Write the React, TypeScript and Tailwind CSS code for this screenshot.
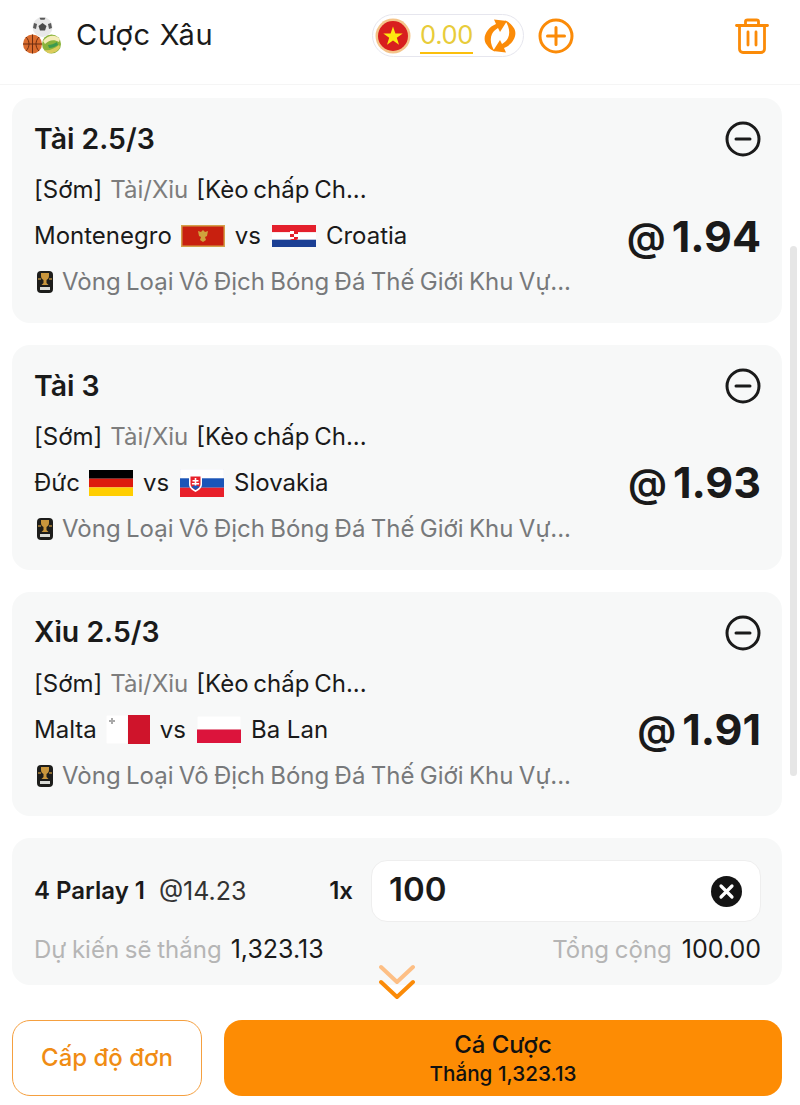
import { ReactNode } from "react";

function SportsIcon() {
  return (
    <svg width="38" height="37" viewBox="0 0 38 37" className="shrink-0">
      <circle cx="19.500" cy="10" r="10" fill="#e8e8e8" />
      <path d="M19.500 6l4 3-1.500 4.500h-5L15.500 9z" fill="#4a4a4a" />
      <path d="M11 6l3 1-1 5-3-1zM28 6l-3 1 1 5 3-1zM16.500 .800h6l-1 2h-4z" fill="#5a5a5a" />
      <circle cx="28.500" cy="27" r="9.500" fill="#8ab33a" />
      <path d="M20 24c5-6 12-7 17-2l-1 3c-5-3-10-2-14 2z" fill="#f4ecb8" />
      <path d="M21 33c5 1 10-1 15-5l1 2c-2 5-8 7-12 6z" fill="#dccb5c" />
      <path d="M25 28c3 0 6-1 9-3l1 3c-3 2-6 3-9 3z" fill="#3c9a50" />
      <circle cx="9.500" cy="27" r="9.500" fill="#da6c2e" />
      <path d="M0 27h19M9.500 17.500v19M3 20c4 4 4 10 0 14M16 20c-4 4-4 10 0 14" stroke="#6d2d10" strokeWidth="1" fill="none" />
    </svg>
  );
}

function CoinFlag() {
  return (
    <svg width="36" height="36" viewBox="0 0 36 36" className="shrink-0">
      <circle cx="18" cy="18" r="17.500" fill="#f4c48a" />
      <circle cx="18" cy="18" r="15" fill="#d81e1e" />
      <path d="M18 8.500l2.400 6.900h7.300l-5.900 4.300 2.200 7-6-4.300-6 4.300 2.200-7-5.900-4.300h7.300z" fill="#fde910" />
    </svg>
  );
}

function RefreshIcon() {
  const half = "M13 6L11 1.500 24 3l-7 11-2-4c-2.500 1.500-4.500 3-6 6-2.500 5.500-1 12 3 17.500-3-1-6-3-8.500-7C-1.500 20 4 9.500 13 6z";
  return (
    <svg width="34" height="36" viewBox="0 0 34 36" fill="#fb8b08" className="shrink-0">
      <path d={half} />
      <path d={half} transform="rotate(180 17 18)" />
    </svg>
  );
}

function PlusCircle() {
  return (
    <svg width="36" height="36" viewBox="0 0 36 36" fill="none" stroke="#fb8b08" strokeWidth="3" strokeLinecap="round" className="shrink-0">
      <circle cx="18" cy="18" r="16" />
      <path d="M18 9.500v17M9.500 18h17" />
    </svg>
  );
}

function TrashIcon() {
  return (
    <svg width="34" height="36" viewBox="0 0 34 36" fill="none" stroke="#fb8b08" strokeWidth="2.800" strokeLinecap="round" strokeLinejoin="round" className="shrink-0">
      <path d="M1.500 7.500h31" />
      <path d="M10.500 7V3.500c0-1 1-1.500 2-1.500h9c1 0 2 .5 2 1.500V7" />
      <path d="M4.500 8v23c0 2 1.500 3.500 3.500 3.500h18c2 0 3.500-1.500 3.500-3.500V8" />
      <path d="M13 14v13M21 14v13" />
    </svg>
  );
}

function MinusCircle() {
  return (
    <svg width="36" height="36" viewBox="0 0 36 36" fill="none" stroke="#1a1a1a" strokeWidth="3" strokeLinecap="round" className="shrink-0">
      <circle cx="18" cy="18" r="16" />
      <path d="M11 18h14" />
    </svg>
  );
}

function TrophyIcon() {
  return (
    <svg width="16" height="22" viewBox="0 0 16 22" className="shrink-0">
      <rect x="0" y="0" width="16" height="22" rx="4" fill="#1d1d1b" />
      <path d="M4 2h8v3c0 2-1 3-2.500 4v3l2 2h-7l2-2V9C5 8 4 7 4 5z" fill="#c9963c" />
      <path d="M1 7h3v2H1zM12 7h3v2h-3z" fill="#8a6a30" />
      <rect x="3" y="16" width="10" height="3" fill="#d9dad5" />
    </svg>
  );
}

function Flag({ children, h = 22 }: { children: ReactNode; h?: number }) {
  return (
    <svg width="44" height={h} viewBox={`0 0 44 ${h}`} className="shrink-0">
      {children}
    </svg>
  );
}

const montenegro = (
  <Flag>
    <rect width="44" height="22" fill="#d4a04a" />
    <rect x="1.500" y="1.500" width="41" height="19" fill="#c8200f" />
    <path d="M22 5l2 2 3-1-1 5-2 1 1 3-3 2-3-2 1-3-2-1-1-5 3 1z" fill="#cfa23c" />
  </Flag>
);
const croatia = (
  <Flag>
    <rect width="44" height="7.300" fill="#e4202c" />
    <rect y="7.300" width="44" height="7.400" fill="#ffffff" />
    <rect y="14.700" width="44" height="7.300" fill="#1b3f94" />
    <rect x="18" y="3" width="8" height="12" rx="2" fill="#e4202c" />
    <path d="M18 6h4v3h-4zM22 9h4v3h-4zM18 12h4v2h-4z" fill="#ffffff" />
  </Flag>
);
const germany = (
  <Flag h={26}>
    <rect width="44" height="8.700" fill="#000000" />
    <rect y="8.700" width="44" height="8.700" fill="#dd1a0e" />
    <rect y="17.400" width="44" height="8.600" fill="#ffce00" />
  </Flag>
);
const slovakia = (
  <Flag h={28}>
    <rect width="44" height="9.300" fill="#ffffff" stroke="#e6e6f2" strokeWidth="0.500" />
    <rect y="9.300" width="44" height="9.400" fill="#1b55b8" />
    <rect y="18.700" width="44" height="9.300" fill="#e8202a" />
    <path d="M9 6h13v9c0 4-3 6-6.500 8C12 21 9 19 9 15z" fill="#ffffff" />
    <path d="M10.500 7.500h10V15c0 3-2.500 4.500-5 6-2.500-1.500-5-3-5-6z" fill="#e8202a" />
    <path d="M14.700 9h1.600v2h2.200v1.500h-2.200v1.500h2.800v1.500h-2.800V18h-1.600v-2.500h-2.800V14h2.800v-1.500h-2.200V11h2.200z" fill="#ffffff" />
    <path d="M11.500 18c2-2 6-2 8 0l-4 3z" fill="#1b55b8" />
  </Flag>
);
const malta = (
  <Flag h={29}>
    <rect width="22" height="29" fill="#ffffff" stroke="#eeeeee" strokeWidth="0.500" />
    <rect x="22" width="22" height="29" fill="#cf142b" />
    <path d="M5 3h2v2h2v2H7v2H5V7H3V5h2z" fill="#a9a9a9" />
  </Flag>
);
const poland = (
  <Flag h={27}>
    <rect width="44" height="13.500" fill="#ffffff" stroke="#eeeeee" strokeWidth="0.500" />
    <rect y="13.500" width="44" height="13.500" fill="#dc143c" />
  </Flag>
);

const bets = [
  { title: "Tài 2.5/3", home: "Montenegro", homeFlag: montenegro, away: "Croatia", awayFlag: croatia, odds: "1.94" },
  { title: "Tài 3", home: "Đức", homeFlag: germany, away: "Slovakia", awayFlag: slovakia, odds: "1.93" },
  { title: "Xỉu 2.5/3", home: "Malta", homeFlag: malta, away: "Ba Lan", awayFlag: poland, odds: "1.91" },
];

export default function App() {
  return (
    <div className="relative flex h-[1105px] w-[800px] flex-col overflow-hidden bg-white font-['Inter',sans-serif] text-[#1a1a1a]">
      {/* header */}
      <header className="flex h-[85px] shrink-0 items-center border-b border-[#f5f5f5] pb-[13px] pl-[23px] pr-[31px]">
        <SportsIcon />
        <span className="ml-[15px] -mt-[3px] w-[296px] shrink-0 text-[29px] leading-none tracking-[0.7px]">Cược Xâu</span>
        <div className="flex h-[43px] w-[152px] shrink-0 items-center rounded-full border border-[#e6e6ee] pl-[2px]">
          <CoinFlag />
          <span className="ml-[9px] border-b-2 border-[#fbbf0c] text-[25.500px] leading-[35px] tracking-[-0.3px] text-[#e8cc3a]">0.00</span>
          <span className="ml-[10px]"><RefreshIcon /></span>
        </div>
        <span className="ml-[14px]"><PlusCircle /></span>
        <span className="ml-auto"><TrashIcon /></span>
      </header>

      {/* bet list */}
      <main className="flex flex-1 flex-col gap-[22px] pl-[12px] pr-[18px] pt-[13px]">
        {bets.map((bet) => (
          <section key={bet.title} className="h-[224.800px] rounded-[18px] bg-[#f7f8f8] pl-[22px] pr-[21px] pt-[21px]">
            <div className="flex h-[40px] items-center justify-between">
              <h2 className="text-[28.400px] font-semibold leading-none">{bet.title}</h2>
              <MinusCircle />
            </div>
            <div className="mt-[13px] flex h-[36px] items-center gap-[8px] text-[24px] leading-none [word-spacing:-2px]">
              <span>[Sớm]</span>
              <span className="text-[#7d7d7d]">Tài/Xỉu</span>
              <span>[Kèo chấp Ch...</span>
            </div>
            <div className="mt-[10px] flex h-[36px] items-center justify-between">
              <div className="flex items-center text-[24px] leading-none">
                <span>{bet.home}</span>
                <span className="ml-[9px]">{bet.homeFlag}</span>
                <span className="ml-[10px] mr-[11px]">vs</span>
                {bet.awayFlag}
                <span className="ml-[10px]">{bet.away}</span>
              </div>
              <span className="flex items-center font-bold leading-none">
                <span className="mr-[6px] text-[39px] font-semibold">@</span>
                <span className="text-[43px]">{bet.odds}</span>
              </span>
            </div>
            <div className="mt-[10px] flex h-[36px] items-center pl-[3px] text-[24px] leading-none text-[#77797b] [word-spacing:-1.400px]">
              <TrophyIcon />
              <span className="ml-[9px]">Vòng Loại Vô Địch Bóng Đá Thế Giới Khu Vự...</span>
            </div>
          </section>
        ))}

        {/* stake */}
        <section className="h-[147px] rounded-[18px] bg-[#f7f8f8] pl-[22px] pr-[21px] pt-[22px]">
          <div className="flex items-center">
            <span className="text-[24px] font-semibold leading-none">4 Parlay 1</span>
            <span className="ml-[14px] text-[25px] leading-none text-[#333]">@14.23</span>
            <span className="ml-auto text-[24px] font-semibold leading-none">1x</span>
            <div className="ml-[18px] flex h-[62px] w-[390px] items-center justify-between rounded-[16px] border border-[#eeeeee] bg-white pl-[17px] pr-[18px]">
              <span className="-mt-[3px] text-[33px] font-semibold leading-none">100</span>
              <svg width="31" height="31" viewBox="0 0 31 31" className="shrink-0">
                <circle cx="15.500" cy="15.500" r="15.500" fill="#141414" />
                <path d="M10 10l11 11M21 10L10 21" stroke="#ffffff" strokeWidth="3.200" strokeLinecap="round" />
              </svg>
            </div>
          </div>
          <div className="mt-[12px] flex items-center justify-between text-[24px] leading-[30px]">
            <div className="flex items-baseline">
              <span className="text-[#b5b5b5] [word-spacing:-1px]">Dự kiến sẽ thắng</span>
              <span className="ml-[9px] text-[25px]">1,323.13</span>
            </div>
            <div className="flex items-baseline">
              <span className="text-[#b5b5b5] [word-spacing:-1px]">Tổng cộng</span>
              <span className="ml-[10px] text-[25px]">100.00</span>
            </div>
          </div>
        </section>
      </main>

      {/* footer */}
      <footer className="flex shrink-0 gap-[22px] pb-[9px] pl-[12px] pr-[18px]">
        <button type="button" className="h-[76px] w-[190px] rounded-[18px] border border-[#f5a040] bg-white text-[24px] font-medium text-[#f08c14]">
          Cấp độ đơn
        </button>
        <button type="button" className="flex h-[76px] flex-1 flex-col items-center justify-center rounded-[18px] bg-[#fd8c04] text-[#111]">
          <span className="text-[24px] font-medium leading-[32px]">Cá Cược</span>
          <span className="text-[20.700px] font-medium leading-[26px]">Thắng 1,323.13</span>
        </button>
      </footer>

      {/* scroll thumb */}
      <div className="absolute left-[790px] top-[246px] h-[530px] w-[7px] rounded-full bg-[#e6e6e6]" />

      {/* collapse chevrons */}
      <svg width="36" height="36" viewBox="0 0 36 36" fill="none" strokeWidth="4" strokeLinecap="round" strokeLinejoin="round" className="absolute left-[379px] top-[964px]">
        <path d="M2 3l16 15L34 3" stroke="#fdbf85" />
        <path d="M2 18l16 15 16-15" stroke="#fb8b08" />
      </svg>
    </div>
  );
}
